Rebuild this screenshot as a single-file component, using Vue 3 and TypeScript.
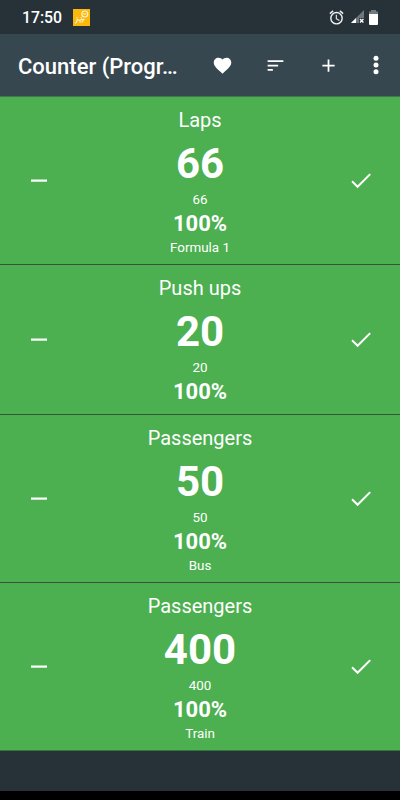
<script setup lang="ts">
interface Counter {
  title: string
  value: number
  goal: number
  percent: number
  note?: string
}

const counters: Counter[] = [
  { title: 'Laps', value: 66, goal: 66, percent: 100, note: 'Formula 1' },
  { title: 'Push ups', value: 20, goal: 20, percent: 100 },
  { title: 'Passengers', value: 50, goal: 50, percent: 100, note: 'Bus' },
  { title: 'Passengers', value: 400, goal: 400, percent: 100, note: 'Train' },
]
</script>

<template>
  <div class="screen">
    <div class="status">
      <span class="clock">17:50</span>
      <svg class="badge" width="17" height="17" viewBox="0 0 17 17">
        <rect width="17" height="17" fill="#fdb90b" />
        <g fill="none" stroke="#fff3d0" stroke-width="1.1">
          <circle cx="11.8" cy="5" r="3" />
          <path d="M10 5h3.6M2.2 14.5l1.6-1.8.4-2.2 2.6 1 .4 2.3M6.8 11.5l2-1.3 1.4.8 1.2-1M8.6 13.4l1.4-1.6" />
          <path d="M3.2 8.8h1.5M7.6 8.8h1.2" />
        </g>
      </svg>
      <div class="system">
        <svg width="17" height="17" viewBox="0 0 24 24" fill="#f1f3f4">
          <path d="M22 5.72l-4.6-3.86-1.29 1.53 4.6 3.86L22 5.72zM7.88 3.39L6.6 1.86 2 5.71l1.29 1.53 4.59-3.85zM12.5 8H11v6l4.75 2.85.75-1.23-4-2.37V8zM12 4a9 9 0 1 0 0 18 9 9 0 0 0 0-18zm0 16a7 7 0 1 1 0-14 7 7 0 0 1 0 14z" />
        </svg>
        <svg class="signal" width="14" height="14" viewBox="0 0 14 14">
          <path d="M13 0v8H8v5H0z" fill="#70777b" />
          <path d="M5 8v5H0z" fill="#fff" />
          <path d="M9 9l3.4 3.6M12.4 9L9 12.6" stroke="#fff" stroke-width="1.4" />
        </svg>
        <svg class="battery" width="9" height="15" viewBox="0 0 9 15">
          <path d="M2 0h5v1.5h2V5H0V1.5h2z" fill="#737a7e" />
          <path d="M0 4h9v10a1 1 0 0 1-1 1H1a1 1 0 0 1-1-1z" fill="#fff" />
        </svg>
      </div>
    </div>

    <header class="bar">
      <h1>Counter (Progr…</h1>
      <div class="actions">
        <svg width="21" height="21" viewBox="0 0 24 24" fill="#fff">
          <path d="M12 21.35l-1.45-1.32C5.4 15.36 2 12.28 2 8.5 2 5.42 4.42 3 7.5 3c1.74 0 3.41.81 4.5 2.09C13.09 3.81 14.76 3 16.5 3 19.58 3 22 5.42 22 8.5c0 3.78-3.4 6.86-8.55 11.54L12 21.35z" />
        </svg>
        <svg width="21" height="21" viewBox="0 0 24 24" fill="#fff">
          <path d="M3 18h6v-2H3v2zM3 6v2h18V6H3zm0 7h12v-2H3v2z" />
        </svg>
        <svg width="21" height="21" viewBox="0 0 24 24" fill="#fff">
          <path d="M19 13h-6v6h-2v-6H5v-2h6V5h2v6h6v2z" />
        </svg>
        <svg class="more" width="6" height="20" viewBox="0 0 6 20" fill="#fff">
          <circle cx="3" cy="3.2" r="2.5" />
          <circle cx="3" cy="10" r="2.5" />
          <circle cx="3" cy="16.8" r="2.5" />
        </svg>
      </div>
    </header>

    <main class="list">
      <section v-for="(c, i) in counters" :key="i" class="card">
        <div class="side">
          <svg width="16" height="3" viewBox="0 0 16 3"><path d="M0 .5h16v2.2H0z" fill="#fff" /></svg>
        </div>
        <div class="info">
          <div class="title">{{ c.title }}</div>
          <div class="value">{{ c.value }}</div>
          <div class="small">{{ c.goal }}</div>
          <div class="percent">{{ c.percent }}%</div>
          <div v-if="c.note" class="small note">{{ c.note }}</div>
        </div>
        <div class="side">
          <svg class="check" width="20" height="16" viewBox="0 0 20 16" fill="none" stroke="#fff" stroke-width="2">
            <path d="M1 9.2l5.6 5.6L19.2 2.1" />
          </svg>
        </div>
      </section>
    </main>
    <div class="navigation"></div>
  </div>
</template>

<style>
body {
  background: #263238;
}
</style>

<style scoped>
.screen {
  display: flex;
  flex-direction: column;
  width: 400px;
  height: 800px;
  overflow: hidden;
  background: #263238;
  color: #fff;
  font-family: Roboto, sans-serif;
}
.status {
  display: flex;
  align-items: center;
  flex: none;
  box-sizing: border-box;
  height: 34px;
  padding: 0 22px;
}
.clock {
  width: 51px;
  font-size: 15.8px;
  font-weight: 500;
  line-height: 20px;
  padding-top: 2px;
}
.system {
  display: flex;
  align-items: center;
  margin-left: auto;
}
.signal {
  margin-left: 6px;
}
.battery {
  margin-left: 4px;
}
.bar {
  display: flex;
  align-items: center;
  justify-content: space-between;
  flex: none;
  box-sizing: border-box;
  height: 62px;
  padding: 0 21.5px 0 18px;
  background: #37474f;
}
h1 {
  margin: 0;
  padding-top: 3px;
  font-size: 22px;
  font-weight: 500;
  line-height: 28px;
  white-space: nowrap;
}
.actions {
  display: flex;
  align-items: center;
  gap: 32.3px;
}
.more {
  margin-left: 1px;
}
.list {
  flex: 1;
}
.card {
  display: grid;
  grid-template-columns: 78px 1fr 78px;
  box-sizing: border-box;
  border-top: 1px solid #33553e;
  background: #4caf50;
}
.card:first-child {
  border-top-color: #41774f;
}
.card:last-child {
  border-bottom: 1px solid #33753e;
}
.side {
  display: flex;
  align-items: center;
  justify-content: center;
  padding-bottom: 1px;
}
.check {
  overflow: visible;
}
.info {
  padding: 8px 0 8px;
  text-align: center;
}
.title {
  font-size: 20px;
  line-height: 30px;
  margin-bottom: 1px;
}
.value {
  font-size: 42px;
  font-weight: 700;
  line-height: 55px;
}
.small {
  font-size: 13.4px;
  line-height: 17px;
}
.percent {
  padding-top: 1px;
  font-size: 22px;
  font-weight: 700;
  line-height: 29px;
}
.note {
  margin-top: 1px;
}
.navigation {
  flex: none;
  height: 9px;
  background: #000;
}
</style>
